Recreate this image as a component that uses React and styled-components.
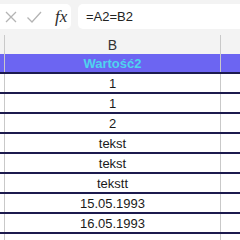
import React from 'react';
import styled, { createGlobalStyle } from 'styled-components';

const GlobalStyle = createGlobalStyle`
  html, body {
    margin: 0;
    padding: 0;
    background: #ffffff;
    overflow: hidden;
  }
  body {
    font-family: "Liberation Sans", Arial, sans-serif;
  }
`

const Sheet = styled.div`
  width: 240px;
  height: 240px;
  overflow: hidden;
  background: #ffffff;
`

const FormulaBar = styled.div`
  display: flex;
  align-items: flex-start;
  height: 35px;
  padding-top: 4px;
  box-sizing: border-box;
  background: #f3f3f3;
`

const ActionBox = styled.div`
  display: flex;
  align-items: center;
  gap: 8px;
  width: 71px;
  height: 25px;
  padding-left: 4px;
  box-sizing: border-box;
  background: #ffffff;
  border-radius: 0 5px 5px 0;
`

const Fx = styled.span`
  font-family: "Liberation Serif", "Times New Roman", serif;
  font-style: italic;
  font-size: 17px;
  color: #2a2a2a;
  margin-left: 5px;
`

const FormulaInput = styled.div`
  flex: 1;
  height: 25px;
  margin-left: 7px;
  padding-left: 8px;
  display: flex;
  align-items: center;
  background: #ffffff;
  border-radius: 5px 0 0 5px;
  font-size: 13px;
  color: #222222;
`

const Row = styled.div`
  display: grid;
  grid-template-columns: 5px 216px 1fr;
  height: ${p => p.$h}px;
  background: ${p => p.$bg || '#ffffff'};
  border-bottom: ${p => (p.$line ? '2px solid #1c1a4e' : 'none')};
`

const Cell = styled.div`
  display: flex;
  align-items: center;
  justify-content: center;
  border-right: ${p => (p.$last ? 'none' : '1px solid #c9c9c9')};
  font-size: ${p => p.$size || 13}px;
  font-weight: ${p => (p.$bold ? 700 : 400)};
  color: ${p => p.$color || '#1a1a1a'};
  white-space: nowrap;
`

const Cross = () => (
  <svg width="14" height="14" viewBox="0 0 14 14">
    <path d="M2 2 L12 12 M12 2 L2 12" stroke="#b4b4b4" strokeWidth="1.3" fill="none" />
  </svg>
)

const Check = () => (
  <svg width="16" height="14" viewBox="0 0 16 14">
    <path d="M1.5 7.5 L6 12 L15 2" stroke="#b4b4b4" strokeWidth="1.3" fill="none" />
  </svg>
)

const values = ['1', '1', '2', 'tekst', 'tekst', 'tekstt', '15.05.1993', '16.05.1993', '']

const App = () => (
  <Sheet>
    <GlobalStyle />
    <FormulaBar>
      <ActionBox>
        <Cross />
        <Check />
        <Fx>fx</Fx>
      </ActionBox>
      <FormulaInput>=A2=B2</FormulaInput>
    </FormulaBar>
    <Row $h={19} $bg="#f3f3f3">
      <Cell />
      <Cell $size={14} $color="#333333">B</Cell>
      <Cell $last />
    </Row>
    <Row $h={18} $bg="#6c65f2" $line>
      <Cell />
      <Cell $bold $color="#4fd3ee">Wartość2</Cell>
      <Cell $last />
    </Row>
    {values.map((v, i) => (
      <Row key={i} $h={18} $line>
        <Cell />
        <Cell>{v}</Cell>
        <Cell $last />
      </Row>
    ))}
  </Sheet>
)

export default App;
